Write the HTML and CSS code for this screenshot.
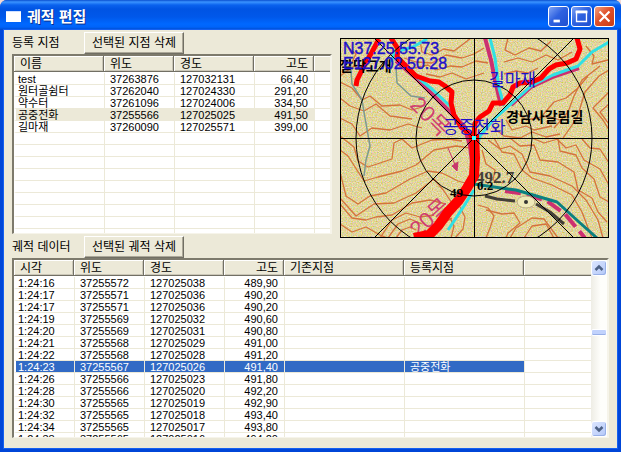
FILE: index.html
```html
<!DOCTYPE html>
<html lang="ko">
<head>
    <meta charset="UTF-8">
    <meta name="viewport" content="width=device-width, initial-scale=1.0">
    <title>궤적 편집</title>
    <link rel="stylesheet" href="styles.css">
</head>
<body>
<div class="window">
    <header class="titlebar">
        <span class="app-icon"></span>
        <h1>궤적 편집</h1>
        <button type="button" class="win-btn" aria-label="최소화">
            <svg viewBox="0 0 21 21"><rect x="5" y="14" width="7" height="3" fill="#fff"/></svg>
        </button>
        <button type="button" class="win-btn" aria-label="최대화">
            <svg viewBox="0 0 21 21"><path d="M5 5h11v11H5z" fill="none" stroke="#fff" stroke-width="1.500"/><rect x="4" y="4" width="13" height="3" fill="#fff"/></svg>
        </button>
        <button type="button" class="win-btn close" aria-label="닫기">
            <svg viewBox="0 0 21 21"><path d="M5 5l11 11M16 5L5 16" stroke="#fff" stroke-width="2.400"/></svg>
        </button>
    </header>

    <main class="client">
        <div class="top">
            <div class="left">
                <div class="toolbar">
                    <h2>등록 지점</h2>
                    <button type="button" class="btn">선택된 지점 삭제</button>
                </div>
                <div class="list points">
                    <table>
                        <colgroup><col class="w90"><col class="w70"><col class="w80"><col class="w60"><col></colgroup>
                        <thead>
                            <tr><th>이름</th><th>위도</th><th>경도</th><th class="num">고도</th><th></th></tr>
                        </thead>
                        <tbody>
                            <tr><td>test</td><td>37263876</td><td>127032131</td><td class="num">66,40</td><td></td></tr>
                            <tr><td>원터골쉼터</td><td>37262040</td><td>127024330</td><td class="num">291,20</td><td></td></tr>
                            <tr><td>약수터</td><td>37261096</td><td>127024006</td><td class="num">334,50</td><td></td></tr>
                            <tr class="inactive"><td>공중전화</td><td>37255566</td><td>127025025</td><td class="num">491,50</td><td></td></tr>
                            <tr><td>길마재</td><td>37260090</td><td>127025571</td><td class="num">399,00</td><td></td></tr>
                            <tr><td></td><td></td><td></td><td></td><td></td></tr>
                            <tr><td></td><td></td><td></td><td></td><td></td></tr>
                            <tr><td></td><td></td><td></td><td></td><td></td></tr>
                            <tr><td></td><td></td><td></td><td></td><td></td></tr>
                            <tr><td></td><td></td><td></td><td></td><td></td></tr>
                            <tr><td></td><td></td><td></td><td></td><td></td></tr>
                            <tr><td></td><td></td><td></td><td></td><td></td></tr>
                            <tr><td></td><td></td><td></td><td></td><td></td></tr>
                            <tr><td></td><td></td><td></td><td></td><td></td></tr>
                        </tbody>
                    </table>
                </div>
                <div class="toolbar">
                    <h2>궤적 데이터</h2>
                    <button type="button" class="btn">선택된 궤적 삭제</button>
                </div>
            </div>

            <svg class="map" viewBox="340 38 269 200" role="img" aria-label="지도">
                <defs>
                    <filter id="paper" x="0" y="0" width="100%" height="100%" color-interpolation-filters="sRGB">
                        <feTurbulence type="fractalNoise" baseFrequency="0.8" numOctaves="1" seed="4"/>
                        <feColorMatrix values=".5 0 0 0 .63  0 .45 0 0 .61  0 0 .9 0 .16  0 0 0 0 1"/>
                    </filter>
                </defs>
                <rect x="340" y="38" width="269" height="200" filter="url(#paper)"/>

                <!-- 등고선 -->
                <g class="contour">
                    <path d="M420 40l2 12 10 3 12-6 10 2 8-6 9-7"/>
                    <path d="M404 58l12 4 16 1 14-8 16 3 12-4 10-6"/>
                    <path d="M415 68l13-3 8 5 14-4 12 1 14-6 12 2"/>
                    <path d="M426 74l14 3 12-4 14 6 18-6"/>
                    <path d="M340 82l12 6 10 12 8-4 12 10 18-1 12 5 10-3"/>
                    <path d="M340 98l10 8 14 5 12-7 14 12 22 3"/>
                    <path d="M340 76l14-10 8 4 6-12"/>
                    <path d="M340 118l12 6 8 12 12-8 18 2 18-6 14 4"/>
                    <path d="M340 136l14 11 4 14 10 6 24-8 2-16 8-4 10 9 20-8 16-1 14 2"/>
                    <path d="M340 150l8 6 16 25 14-4 24-6 14-6 18-15 22-4 14 2"/>
                    <path d="M340 172l6 24 12 8 12-8 16-3 24-14 18-8 14 2 16 8 14 4"/>
                    <path d="M340 198l16 18 18-12 20-1 22-10 18-14 10 12 8 12"/>
                    <path d="M340 204l12 14 14 2 10-3 16-2 20-12 18-3 16 4"/>
                    <path d="M340 224l12 8 14-5 14 8 10 4"/>
                    <path d="M380 238l12-18 14-7 14 4 14-2"/>
                    <path d="M388 238l10-14 12-5 12 5"/>
                    <path d="M396 238l6-8 8-3 6 3"/>
                    <path d="M460 207l5 10-2 12-8 9"/>
                    <path d="M450 218l4 8-3 12"/>
                    <path d="M434 236l8-12 10-6"/>
                    <path d="M508 38l-3 12 10 5 14-7 12 3 10-10"/>
                    <path d="M504 62l14-4 14 4 14-7 12 5 14-8"/>
                    <path d="M504 74l12-3 12 2 10-5"/>
                    <path d="M586 46l8 10-2 8 16-4"/>
                    <path d="M588 76l-10 12-12 10-12 4-12 14"/>
                    <path d="M600 66l-18 14-8 16-6 16-14 16"/>
                    <path d="M609 70l-10 6-14 16-8 26-14 20"/>
                    <path d="M609 92l-16 16 10 12 6 10"/>
                    <path d="M609 104l-9 8 9 12"/>
                    <path d="M516 112l10 8 22-4 12 4"/>
                    <path d="M506 120l6 10 14-4 8 4 18-4"/>
                    <path d="M494 128l10 8 16 2 12-6 14 5 14-3"/>
                    <path d="M488 140l12 9 10-3 12 8 8 18 20 4 22 10 14 14 12 20 5 18"/>
                    <path d="M494 138l8 14 12 2 8 16 10 8 20 7 20 10 10 17 10 26"/>
                    <path d="M510 138l10 8 14-1 6 15 18 2 16 10 4 18 14 8 6 14 9 10"/>
                    <path d="M532 138l12 5 14-4 2 12 16 4 6 13 12 11 6 18 9 5"/>
                    <path d="M556 138l10 10 10-3 8 15 16 9 9 16"/>
                    <path d="M582 139l8 9 10 1 9 14"/>
                    <path d="M482 150l4 14 9 6-2 10 10 3"/>
                    <path d="M478 205l10 3 6 8-4 12-4 10"/>
                    <path d="M486 210l16 4 12-1 6 10-12 10-2 5"/>
                    <path d="M524 238l8-12 14-2 8 14"/>
                    <path d="M510 238l6-10 16-10 12 1 14 19"/>
                    <path d="M346 46l10 8-6 12"/>
                </g>

                <!-- 계곡 -->
                <g class="stream">
                    <path d="M350 58l2 26 10 16 3 18 5 28-4 14-2 16"/>
                    <path d="M396 66l1 17 14 13 14 2"/>
                </g>

                <!-- 도로 -->
                <g class="route">
                    <path class="pink" d="M396 61l22 19 32 32 14 14 6 20 2 16"/>
                    <path class="pink" d="M485 38l6 22 4 20 6 26"/>
                    <path class="pink" d="M579 68l-24 8-24 11-20 18"/>
                    <path class="cyan" d="M427 39l-14 8-18 5-4 10M411 72l22 18 18 17"/>
                    <path class="cyan" d="M490 38l5 20 4 30 5 18"/>
                    <path class="cyan" d="M609 42l-17 10-14 14-25 9-22 11-20 18-18 16-13 16-4 16"/>
                    <path class="cyan" d="M474 190l-10 16-16 24"/>
                    <path class="road" d="M485 196l12 3 18 2M536 204l14 8 14 12"/>
                    <path class="pink dash" d="M505 191l20 3 22 7 18 13 20 24"/>
                    <path class="teal" d="M474 184l20 3 22 3 41 12 22 20 18 16"/>
                </g>
                <ellipse cx="526" cy="202" rx="9" ry="6" fill="#efe9b8" stroke="#b8ad80"/>
                <circle cx="526" cy="202" r="2" fill="#333"/>
                <path d="M448 148l8 19M452 166l5 5 1-9z" stroke="#c8386c" fill="#c8386c"/>
                <text class="lot" transform="translate(409 106) rotate(45)">20목</text>
                <text class="lot" transform="translate(418 238) rotate(-42)">20목</text>
                <text class="height" x="476" y="183">492.7</text>

                <!-- 궤적 -->
                <g class="track">
                    <path d="M379 39l-7 13-6 10-5 10-4 8-1 6"/>
                    <path d="M391 38l7 11-1 8 9 9 10 10 14 5 9 1 6 4 7 6-1 11 3 12 7 12 13 10"/>
                    <path d="M577 38l3 11-4 10-9 4-11 2-7 4-8 9-9 4-12 1-7 4-3 8-7 8-10 0-4 8-9 6-5 6-1 11"/>
                    <path class="trunk" d="M474 134l1 24-1 18-7 12-8 12-11 12-10 14-9 9-15 3"/>
                </g>

                <!-- 거리 눈금 -->
                <g class="scope">
                    <circle cx="474" cy="138" r="58"/>
                    <circle cx="474" cy="138" r="118"/>
                    <path d="M340 138.500h269M474.500 38v200M374 38l200 200M574 38L374 238"/>
                </g>
                <rect x="472" y="136" width="4" height="4" fill="#3ff"/>

                <text class="spot" x="450" y="197">49</text>
                <text class="spot" x="477" y="190">0.2</text>
                <text class="place" x="340" y="71">깔딱고개</text>
                <text class="place" x="506" y="122">경남사갈림길</text>
                <text class="mark" x="489" y="86">길마재</text>
                <text class="mark" x="443" y="133">공중전화</text>
                <text class="coord" x="343" y="54">N37.25.55.73</text>
                <text class="coord" x="343" y="69">E127.02.50.28</text>
                <rect x="340.500" y="38.500" width="268" height="199" fill="none" stroke="#000"/>
            </svg>
        </div>

        <div class="list tracks">
            <table>
                <colgroup><col class="w60"><col class="w70"><col class="w80"><col class="w60"><col class="w120"><col class="w120"><col></colgroup>
                <thead>
                    <tr><th>시각</th><th>위도</th><th>경도</th><th class="num">고도</th><th>기존지점</th><th>등록지점</th><th></th></tr>
                </thead>
                <tbody>
                    <tr><td>1:24:16</td><td>37255572</td><td>127025038</td><td class="num">489,90</td><td></td><td></td><td></td></tr>
                    <tr><td>1:24:17</td><td>37255571</td><td>127025036</td><td class="num">490,20</td><td></td><td></td><td></td></tr>
                    <tr><td>1:24:17</td><td>37255571</td><td>127025036</td><td class="num">490,20</td><td></td><td></td><td></td></tr>
                    <tr><td>1:24:19</td><td>37255569</td><td>127025032</td><td class="num">490,60</td><td></td><td></td><td></td></tr>
                    <tr><td>1:24:20</td><td>37255569</td><td>127025031</td><td class="num">490,80</td><td></td><td></td><td></td></tr>
                    <tr><td>1:24:21</td><td>37255568</td><td>127025029</td><td class="num">491,00</td><td></td><td></td><td></td></tr>
                    <tr><td>1:24:22</td><td>37255568</td><td>127025028</td><td class="num">491,20</td><td></td><td></td><td></td></tr>
                    <tr class="selected"><td>1:24:23</td><td>37255567</td><td>127025026</td><td class="num">491,40</td><td></td><td>공중전화</td><td></td></tr>
                    <tr><td>1:24:26</td><td>37255566</td><td>127025023</td><td class="num">491,80</td><td></td><td></td><td></td></tr>
                    <tr><td>1:24:28</td><td>37255566</td><td>127025020</td><td class="num">492,20</td><td></td><td></td><td></td></tr>
                    <tr><td>1:24:30</td><td>37255565</td><td>127025019</td><td class="num">492,90</td><td></td><td></td><td></td></tr>
                    <tr><td>1:24:32</td><td>37255565</td><td>127025018</td><td class="num">493,40</td><td></td><td></td><td></td></tr>
                    <tr><td>1:24:34</td><td>37255565</td><td>127025017</td><td class="num">493,80</td><td></td><td></td><td></td></tr>
                    <tr><td>1:24:38</td><td>37255565</td><td>127025016</td><td class="num">494,20</td><td></td><td></td><td></td></tr>
                </tbody>
            </table>
            <div class="scrollbar">
                <button type="button" class="arrow" aria-label="위로"><svg viewBox="0 0 14 14"><path d="M3.500 9L7 5.500 10.500 9"/></svg></button>
                <span></span>
                <span class="thumb"></span>
                <span></span>
                <button type="button" class="arrow" aria-label="아래로"><svg viewBox="0 0 14 14"><path d="M3.500 5L7 8.500 10.500 5"/></svg></button>
            </div>
        </div>
    </main>
</div>
</body>
</html>
```
FILE: styles.css
```css
* {
    box-sizing: border-box;
}
body {
    margin: 0;
    background: #f3d9d4;
    font-family: "Liberation Sans", "Noto Sans CJK KR", sans-serif;
    font-size: 12px;
    color: #000;
}
button {
    font: inherit;
    padding: 0;
}
h1, h2 {
    margin: 0;
    font-weight: normal;
}

/* 창 */
.window {
    display: flex;
    flex-direction: column;
    height: 100vh;
    background: #0046d8;
    border-radius: 7px 7px 0 0;
    overflow: hidden;
}
.titlebar {
    display: flex;
    align-items: center;
    gap: 2px;
    height: 30px;
    padding: 3px 6px 0;
    background: linear-gradient(#0a4fd0 0, #3a93ff 2px, #0a62ee 5px, #0054e3 9px, #0058ea 17px, #0068ff 24px, #0064fa 27px, #0048c8 30px);
}
.app-icon {
    width: 15px;
    height: 11px;
    background: #fff;
    border-top: 1px solid #cfe0ff;
}
.titlebar h1 {
    flex: 1;
    padding-left: 4px;
    font-size: 15px;
    line-height: 20px;
    font-weight: bold;
    color: #fff;
    text-shadow: 1px 1px #0a2f8c;
}
.win-btn {
    width: 21px;
    height: 21px;
    border: 1px solid #fff;
    border-radius: 3px;
    background: linear-gradient(135deg, #7fa4f5, #2f62e0 45%, #1f50d0);
}
.win-btn svg {
    display: block;
    width: 100%;
    height: 100%;
}
.win-btn.close {
    background: linear-gradient(135deg, #f0a080, #e0502a 45%, #c83c14);
}
.client {
    flex: 1;
    min-height: 0;
    display: flex;
    flex-direction: column;
    margin: 0 4px 4px;
    padding: 2px 8px 10px;
    background: #ece9d8;
    box-shadow: 0 0 0 1px #1560f0;
}

/* 위쪽: 지점 목록과 지도 */
.top {
    display: grid;
    grid-template-columns: minmax(0, 1fr) 269px;
    gap: 8px;
}
.left {
    display: flex;
    flex-direction: column;
}
.toolbar {
    display: grid;
    grid-template-columns: 72px 100px;
    align-items: center;
    height: 22px;
}
.toolbar h2 {
    font-size: 12px;
    line-height: 16px;
    white-space: nowrap;
}
.btn {
    height: 22px;
    line-height: 16px;
    color: #000;
    background: #ece9d8;
    border: 1px solid;
    border-color: #fff #716f64 #716f64 #fff;
    box-shadow: inset -1px -1px #aca899;
    white-space: nowrap;
}

/* 목록 */
.list {
    display: flex;
    align-items: flex-start;
    overflow: hidden;
    background: #fff;
    border: 2px solid;
    border-color: #7d7a6c #f6f4ea #f6f4ea #7d7a6c;
    border-bottom-width: 1px;
}
.points {
    height: 180px;
    margin-bottom: 2px;
}
.tracks {
    flex: 1;
    min-height: 0;
}
table {
    flex: 1;
    width: 100%;
    min-width: 0;
    table-layout: fixed;
    border-collapse: separate;
    border-spacing: 0;
}
.w60 { width: 60px; }
.w70 { width: 70px; }
.w80 { width: 80px; }
.w90 { width: 90px; }
.w120 { width: 120px; }
th {
    height: 17px;
    padding: 0 6px;
    font-weight: normal;
    line-height: 14px;
    text-align: left;
    background: #ece9d8;
    border-bottom: 1px solid #fff;
    box-shadow: inset -1px -1px #716f64, inset 1px 1px #fff, inset -2px -2px #cbc7b8;
}
th:last-child {
    box-shadow: inset 0 -1px #716f64, inset 1px 1px #fff, inset 0 -2px #cbc7b8;
}
td {
    height: 12px;
    padding: 1px 6px 0 5px;
    font-size: 11px;
    line-height: 10px;
    white-space: nowrap;
    border-bottom: 1px solid #ece9d8;
    border-left: 1px solid #ece9d8;
}
td:first-child {
    padding-left: 2px;
    border-left: 2px solid #fff;
}
.num {
    text-align: right;
}
.inactive td:not(:last-child) {
    background: #ece9d8;
}
.selected td:not(:last-child) {
    background: #316ac5;
    background-clip: padding-box;
    color: #fff;
}

/* 스크롤바 */
.scrollbar {
    display: grid;
    grid-template-rows: 16px 52fr 7px 84fr 16px;
    width: 16px;
    height: 100%;
    background: linear-gradient(90deg, #eeede5, #fefefb 60%);
}
.arrow {
    width: 16px;
    border: 1px solid #fff;
    border-radius: 3px;
    background: linear-gradient(135deg, #dbe5ff, #b4c8f8);
    box-shadow: inset -1px -1px #98b0e8;
}
.arrow svg {
    display: block;
    width: 14px;
    height: 14px;
    fill: none;
    stroke: #4d6185;
    stroke-width: 2.5;
}
.thumb {
    background: #c1d2fc;
    border: 1px solid #fff;
    border-radius: 2px;
    box-shadow: inset 0 -1px #98b0e8;
}

/* 지도 */
.map {
    display: block;
    width: 100%;
    margin-top: 6px;
}
.map path, .map circle {
    stroke-linejoin: round;
}
.contour path {
    fill: none;
    stroke: #d4733c;
    stroke-width: 1.3;
}
.stream path {
    fill: none;
    stroke: #7c9a90;
    stroke-width: 1.5;
}
.route path {
    fill: none;
    stroke-width: 3;
}
.route .pink { stroke: #cc3070; stroke-width: 4; }
.route .cyan { stroke: #30e0e4; }
.route .road { stroke: #444038; }
.route .teal { stroke: #0c8080; }
.route .dash { stroke-dasharray: 16 6; }
.track path {
    fill: none;
    stroke: #f00;
    stroke-width: 5;
}
.track .trunk {
    stroke-width: 10;
}
.scope circle, .scope path {
    fill: none;
    stroke: #000;
    stroke-width: 1;
}
.lot {
    font-size: 22px;
    fill: #d04070;
}
.height {
    font-family: "Liberation Serif", serif;
    font-size: 17px;
    font-weight: bold;
    fill: #444038;
}
.spot {
    font-family: "Liberation Serif", serif;
    font-size: 13px;
    font-weight: bold;
}
.place {
    font-size: 14px;
    font-weight: bold;
}
.mark {
    font-size: 17px;
    fill: #1c10c8;
}
.coord {
    font-size: 16px;
    fill: #1c10c8;
    stroke: #1c10c8;
    stroke-width: 0.4;
}
```
